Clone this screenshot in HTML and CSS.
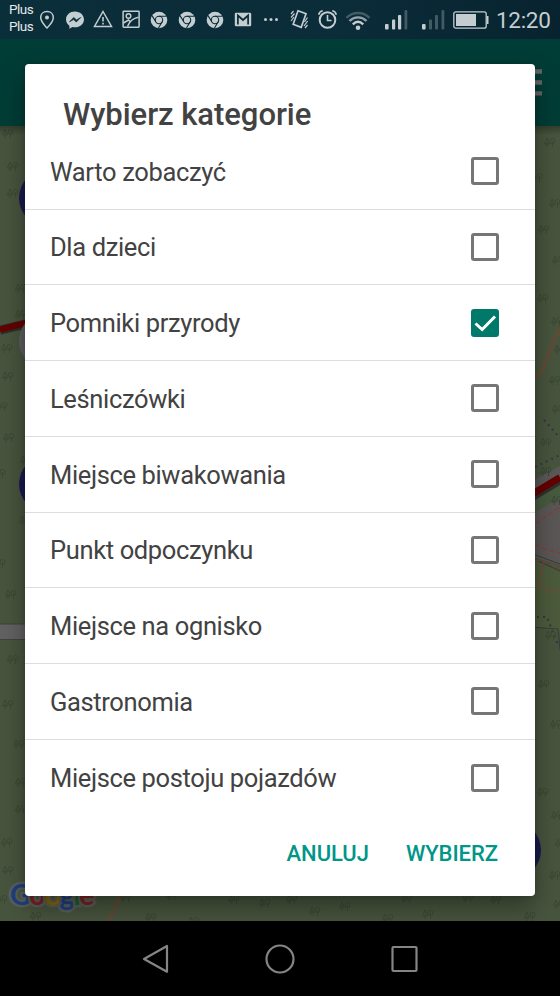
FILE: index.html
```html
<!DOCTYPE html>
<html lang="pl">
<head>
<meta charset="utf-8">
<title>Wybierz kategorie</title>
<link rel="stylesheet" href="styles.css">
</head>
<body>
<svg class="defs" width="0" height="0" aria-hidden="true">
  <defs>
    <g id="trees" fill="none" stroke="#3c4935" stroke-width="1">
      <path d="M3 0 L.5 6 H5.500Z M3 4v5"/><circle cx="8.500" cy="3" r="2.500"/><path d="M8.500 3v6"/>
    </g>
    <symbol id="chrome" viewBox="0 0 28 28">
      <circle cx="14" cy="14" r="8.300" fill="#c4cdd0"/>
      <circle cx="14" cy="14" r="3.700" fill="none" stroke="#0a2b38" stroke-width="1.100"/>
      <path d="M14 10.300h7.500M10.800 15.800L7 9.600M17.200 15.800L13.500 22" stroke="#0a2b38" stroke-width="1.100"/>
    </symbol>
  </defs>
</svg>
<div class="screen">
  <header class="status">
    <div class="carrier"><span>Plus</span><span>Plus</span></div>
    <svg class="slot" viewBox="0 0 28 28"><path d="M14 5.500c-3.700 0-6.300 2.600-6.300 6 0 4.200 6.300 10.500 6.300 10.500s6.300-6.300 6.300-10.500c0-3.400-2.600-6-6.300-6z" fill="none" stroke="#c4cdd0" stroke-width="1.500"/><circle cx="14" cy="11.500" r="2" fill="#c4cdd0"/></svg>
    <svg class="slot" viewBox="0 0 28 28"><path d="M14 5.500c-5 0-9 3.500-9 8 0 2.600 1.300 4.800 3.400 6.200v3l3-1.700c.8.200 1.700.3 2.600.3 5 0 9-3.400 9-7.800s-4-8-9-8z" fill="#c4cdd0"/><path d="M8.500 15.800l4.200-4.300 2.800 2.400 4.200-2.400-4.400 4.500-2.700-2.500z" fill="#0a2b38" stroke="#0a2b38" stroke-width=".7"/></svg>
    <svg class="slot" viewBox="0 0 28 28"><path d="M14 5.500L22.500 20.500H5.500z" fill="none" stroke="#c4cdd0" stroke-width="1.500"/><path d="M14 11v4.500M14 16.800v1.800" stroke="#c4cdd0" stroke-width="1.600"/></svg>
    <svg class="slot" viewBox="0 0 28 28"><g fill="none" stroke="#c4cdd0" stroke-width="1.500"><rect x="6.100" y="5.200" width="16" height="16" rx=".7"/><circle cx="11.500" cy="10" r="2.300"/><path d="M6.500 17l5-3 2 2M10.500 20.500c2-5.500 5-8.200 11-9.200"/></g></svg>
    <svg class="slot"><use href="#chrome"/></svg>
    <svg class="slot"><use href="#chrome"/></svg>
    <svg class="slot"><use href="#chrome"/></svg>
    <svg class="slot" viewBox="0 0 28 28"><rect x="5.800" y="6.700" width="16.400" height="13.600" rx="1.300" fill="#c4cdd0"/><path d="M8.900 18.500V9.500l5.100 4.500 5.100-4.500v9" fill="none" stroke="#0a2b38" stroke-width="1.700"/></svg>
    <svg class="slot" viewBox="0 0 28 28" fill="#c4cdd0"><circle cx="8.500" cy="13.500" r="1.500"/><circle cx="14" cy="13.500" r="1.500"/><circle cx="19.500" cy="13.500" r="1.500"/></svg>
    <svg class="slot" viewBox="0 0 28 28"><g fill="none" stroke="#c4cdd0"><path stroke-width="1.700" d="M13 4.800l8 3-4.800 13.500-8-3z"/><path stroke-width="1.200" d="M8.500 5l-2.500 3M9.500 7.500l-3.500 4M9 11l-3 4M22.500 11.500l-3 4.500M22.700 15L19 20M22.500 19l-2.500 3"/></g></svg>
    <svg class="slot" viewBox="0 0 28 28"><g fill="none" stroke="#c4cdd0" stroke-width="2"><circle cx="14.500" cy="14" r="7.800"/><path stroke-width="1.600" d="M14.500 9v5.500h4M5.700 8.700c.5-2 2-3.600 4-4M23.300 8.700c-.5-2-2-3.600-4-4"/></g></svg>
    <svg class="slot wifi" viewBox="0 0 28 28"><g fill="none" stroke="#c4cdd0" stroke-width="2.400"><path opacity=".3" d="M2.500 11.800c6.500-6.400 16.500-6.400 23 0"/><path opacity=".75" d="M5.500 15c5-4.800 12-4.800 17 0"/><path d="M8.800 18.300c3.200-3 7.200-3 10.400 0"/></g><circle cx="14" cy="21.700" r="2.300" fill="#c4cdd0"/></svg>
    <svg class="signal" viewBox="0 0 23 20" fill="#c4cdd0"><rect x="0" y="14" width="3.600" height="5.500" rx="1"/><rect x="7" y="9.500" width="3.200" height="10" rx="1"/><rect x="13" y="5" width="3.200" height="14.500" rx="1"/><rect x="19.500" y="0" width="2.800" height="19.500" rx="1" opacity=".3"/></svg>
    <svg class="signal second" viewBox="0 0 23 20" fill="#c4cdd0"><rect x="0" y="14" width="3.600" height="5.500" rx="1"/><g opacity=".3"><rect x="7" y="9.500" width="3" height="10" rx="1"/><rect x="13" y="5" width="3" height="14.500" rx="1"/><rect x="19.500" y="0" width="2.800" height="19.500" rx="1"/></g></svg>
    <svg class="battery" viewBox="0 0 36 18"><rect x=".8" y=".8" width="32.400" height="16.400" rx="2" fill="none" stroke="#c4cdd0" stroke-width="1.300"/><rect x="3" y="3" width="20" height="12" fill="#c4cdd0"/><path d="M34.600 5v8" stroke="#c4cdd0" stroke-width="1.800"/></svg>
    <span class="clock">12:20</span>
  </header>
  <div class="appbar"><svg class="menu" width="30" height="30"><path d="M0 4.500h30M0 15.500h30M0 26.300h30" stroke="#666" stroke-width="4.300"/></svg></div>
  <main class="map">
    <svg class="canvas" width="560" height="795" viewBox="0 126 560 795">
      <rect y="126" width="560" height="795" fill="#48553e"/>
      <path d="M0 330L30 323" stroke="#2b302a" stroke-width="9"/>
      <path d="M0 329.500L30 322" stroke="#650000" stroke-width="6"/>
      <rect x="0" y="624" width="40" height="15.500" fill="#626262"/>
      <path d="M0 624h40M0 639.500h40" stroke="#3f433d"/>
      <path d="M530 482L560 466V498L530 516z" fill="#5a5858"/>
      <path d="M530 502L560 484V499L530 516z" fill="#475b3e"/>
      <path d="M530 515L560 498V565L530 556z" fill="#5b5757"/>
      <path d="M530 559L560 571V632L530 626z" fill="#4c5b3c"/>
      <path d="M530 557L560 571M530 553L560 564M530 627L558 629L560 650" fill="none" stroke="#3a3b38"/>
      <path d="M530 499L560 481" stroke="#303030" stroke-width="7"/>
      <path d="M530 495.500L560 477.500" stroke="#650000" stroke-width="7"/>
      <path d="M535 524L560 507M535 544Q544 550 560 553M535 560Q548 562 560 569M544 563L538 586L560 593" fill="none" stroke="#813f3b" stroke-width="1.400" stroke-dasharray="5 3"/>
      <path d="M544 420L560 438M535 467L560 455M537 617L547 617L558 645" fill="none" stroke="#3b3440" stroke-width="2" stroke-dasharray="2 4"/>
      <path d="M560 329C550 341 549 366 535 378M121 895L108 922" fill="none" stroke="#56513e" stroke-width="4"/>
      <path d="M560 329C550 341 549 366 535 378M121 895L108 922" fill="none" stroke="#7b421d" stroke-width="1.500" stroke-dasharray="5 4"/>
      <g fill="#181c4d"><circle cx="48" cy="198" r="29"/><circle cx="48" cy="484" r="29"/><circle cx="512" cy="850" r="29"/></g>
      <circle cx="48" cy="341" r="29" fill="#606060"/>
      <use href="#trees" x="2" y="129"/><use href="#trees" x="7" y="162"/><use href="#trees" x="7" y="189"/><use href="#trees" x="15" y="284"/><use href="#trees" x="15" y="310"/><use href="#trees" x="1" y="344"/><use href="#trees" x="2" y="372"/><use href="#trees" x="-4" y="402"/><use href="#trees" x="3" y="433"/><use href="#trees" x="-6" y="469"/><use href="#trees" x="20" y="456"/><use href="#trees" x="19" y="516"/><use href="#trees" x="-6" y="559"/><use href="#trees" x="5" y="590"/><use href="#trees" x="7" y="655"/><use href="#trees" x="2" y="700"/><use href="#trees" x="13" y="740"/>
      <use href="#trees" x="15" y="778"/><use href="#trees" x="15" y="805"/><use href="#trees" x="1" y="838"/><use href="#trees" x="2" y="866"/><use href="#trees" x="-4" y="895"/><use href="#trees" x="30" y="912"/><use href="#trees" x="145" y="913"/><use href="#trees" x="188" y="917"/><use href="#trees" x="120" y="893"/><use href="#trees" x="166" y="891"/><use href="#trees" x="228" y="895"/><use href="#trees" x="259" y="899"/><use href="#trees" x="286" y="895"/><use href="#trees" x="309" y="907"/><use href="#trees" x="339" y="902"/><use href="#trees" x="382" y="914"/><use href="#trees" x="401" y="894"/><use href="#trees" x="422" y="910"/><use href="#trees" x="462" y="893"/><use href="#trees" x="490" y="895"/><use href="#trees" x="524" y="912"/>
      <use href="#trees" x="544" y="138"/><use href="#trees" x="531" y="173"/><use href="#trees" x="549" y="199"/><use href="#trees" x="538" y="225"/><use href="#trees" x="552" y="256"/><use href="#trees" x="537" y="294"/><use href="#trees" x="551" y="317"/><use href="#trees" x="554" y="345"/><use href="#trees" x="549" y="376"/><use href="#trees" x="552" y="405"/><use href="#trees" x="540" y="438"/><use href="#trees" x="540" y="467"/><use href="#trees" x="551" y="496"/><use href="#trees" x="545" y="631"/><use href="#trees" x="538" y="680"/><use href="#trees" x="550" y="720"/><use href="#trees" x="537" y="788"/><use href="#trees" x="551" y="811"/><use href="#trees" x="555" y="839"/><use href="#trees" x="549" y="871"/><use href="#trees" x="553" y="900"/>
    </svg>
    <div class="google"><span class="b">G</span><span class="r">o</span><span class="y">o</span><span class="b">g</span><span class="g">l</span><span class="r">e</span></div>
  </main>
  <nav class="nav">
    <svg width="28" height="30" viewBox="0 0 28 30"><path d="M25 2v25.800L2 15z"/></svg>
    <svg width="30" height="30" viewBox="0 0 30 30"><circle cx="15" cy="15" r="13.500"/></svg>
    <svg width="28" height="30" viewBox="0 0 28 30"><rect x="2.500" y="3" width="24" height="24" rx="1"/></svg>
  </nav>
  <section class="dialog" role="dialog">
    <h1>Wybierz kategorie</h1>
    <ul class="list">
      <li><span>Warto zobaczyć</span><i class="box"></i></li>
      <li><span>Dla dzieci</span><i class="box"></i></li>
      <li><span>Pomniki przyrody</span><i class="box checked"><svg width="28" height="28"><path d="M4.500 14.500l6.700 6L24 7.500" fill="none" stroke="#fff" stroke-width="3"/></svg></i></li>
      <li><span>Leśniczówki</span><i class="box"></i></li>
      <li><span>Miejsce biwakowania</span><i class="box"></i></li>
      <li><span>Punkt odpoczynku</span><i class="box"></i></li>
      <li><span>Miejsce na ognisko</span><i class="box"></i></li>
      <li><span>Gastronomia</span><i class="box"></i></li>
      <li><span>Miejsce postoju pojazdów</span><i class="box"></i></li>
    </ul>
    <div class="actions"><button>ANULUJ</button><button>WYBIERZ</button></div>
  </section>
</div>
</body>
</html>
```

FILE: styles.css
```css
* { box-sizing: border-box; }
body { margin: 0; font-family: Roboto, "Liberation Sans", sans-serif; background: #000; }
.defs { display: block; height: 0; }
.screen { position: relative; width: 560px; height: 996px; overflow: hidden; display: flex; flex-direction: column; }

.status { height: 39px; flex: none; display: flex; align-items: center; background: linear-gradient(100deg, #0a2e3a, #0b2c39 60%, #07232f); }
.carrier { width: 24px; margin-left: 9px; display: flex; flex-direction: column; font-size: 13.500px; letter-spacing: -.5px; line-height: 17px; color: #e3e8e9; padding-bottom: 3px; }
.slot { width: 28px; height: 28px; flex: none; }
.wifi { margin-left: 3px; }
.signal { width: 23px; height: 20px; flex: none; margin-left: 13px; }
.second { margin-left: 14px; }
.battery { width: 36px; height: 18px; flex: none; margin-left: 8px; margin-top: 1px; }
.clock { margin-left: 7px; font-size: 22.500px; letter-spacing: -.3px; color: #c4cdd0; line-height: 26px; }

.appbar { height: 87px; flex: none; background: #003d36; display: flex; justify-content: flex-end; padding: 28px 18px 0 0; }
.map { position: relative; height: 795px; flex: none; }
.canvas { display: block; }
.map::before { content: ""; position: absolute; inset: 0 0 auto; height: 9px; background: linear-gradient(#0004, #0000); }
.google { position: absolute; left: 10px; top: 750px; font: 700 28.500px/36px Lato, sans-serif; letter-spacing: -1.200px; -webkit-text-stroke: 5px #59605a; paint-order: stroke fill; }
.b { color: #203f82; }
.r { color: #802020; }
.y { color: #8a6800; }
.g { color: #16602d; }

.nav { height: 75px; background: #000; display: flex; justify-content: space-between; align-items: center; padding: 0 142px; }
.nav svg { fill: none; stroke: #858585; stroke-width: 2.200; stroke-linejoin: round; }

.dialog { position: absolute; left: 25px; top: 64px; width: 510px; height: 832px; background: #fff; border-radius: 4px; box-shadow: 0 12px 26px rgba(0,0,0,.36), 0 0 5px rgba(0,0,0,.15); display: flex; flex-direction: column; }
h1 { margin: 0; padding: 30px 38px 0; height: 69.800px; font-size: 31px; letter-spacing: -.05px; line-height: 42px; font-weight: 500; color: #424242; }
.list { list-style: none; margin: 0; padding: 0; }
.list li { height: 75.750px; display: flex; align-items: center; justify-content: space-between; padding: 0 36px 0 25px; border-bottom: 1px solid #dedede; font-size: 25.500px; letter-spacing: -.36px; color: #424242; }
.list span { padding-top: 1px; }
.list li:last-child { border-bottom: 0; }
.box { width: 28px; height: 28px; border: 3px solid #767676; border-radius: 3px; }
.checked { border: 0; background: #00796b; }
.checked svg { display: block; }
.actions { display: flex; justify-content: flex-end; gap: 37px; padding: 14px 37px 0 0; }
button { border: 0; padding: 0; background: none; font: 500 22px/48px Roboto, sans-serif; letter-spacing: -.05px; color: #009688; }
```
